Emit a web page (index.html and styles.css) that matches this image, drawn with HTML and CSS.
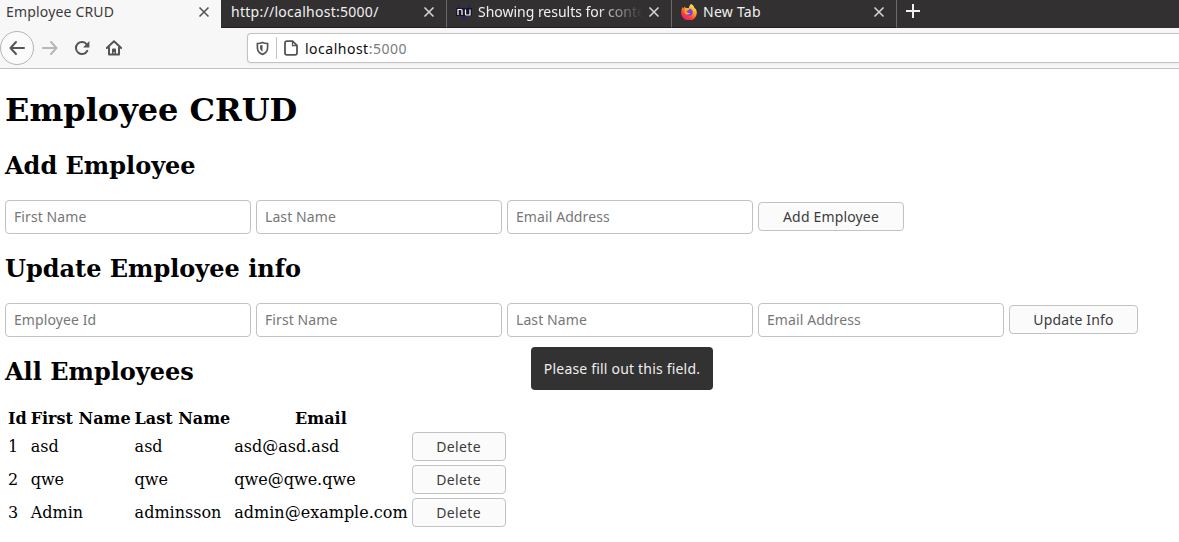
FILE: index.html
```html
<!DOCTYPE html>
<html lang="en">
<head>
<meta charset="utf-8">
<title>Employee CRUD</title>
<link rel="stylesheet" href="styles.css">
</head>
<body>
<header class="browser">
  <div class="tabs">
    <div class="tab tab-active"><span class="tab-title t-crud">Employee CRUD</span><svg class="close" viewBox="0 0 12 12"><path d="M1.5 1.5l9 9M10.5 1.5l-9 9"/></svg></div>
    <div class="tab tab-second"><span class="tab-title t-url">http://localhost:5000/</span><svg class="close" viewBox="0 0 12 12"><path d="M1.5 1.5l9 9M10.5 1.5l-9 9"/></svg></div>
    <div class="tab"><svg class="favicon" viewBox="0 0 16 16"><path d="M2 2l6 12 6-12" fill="none" stroke="#252362" stroke-width="2.4"/><path d="M0 4h16v8H0z" fill="#171629"/><path d="M2 11V5.5h3q1 0 1 1V11M9.500 5.500V10q0 1 1 1H14V5.500" fill="none" stroke="#fff" stroke-width="1.200"/></svg><span class="tab-title t-results">Showing results for conte</span><svg class="close" viewBox="0 0 12 12"><path d="M1.5 1.5l9 9M10.5 1.5l-9 9"/></svg></div>
    <div class="tab"><svg class="favicon" viewBox="0 0 16 16"><defs><linearGradient id="flame" x1=".85" y1=".05" x2=".25" y2="1"><stop offset="0" stop-color="#fff44f"/><stop offset=".4" stop-color="#ff9a27"/><stop offset=".7" stop-color="#ff4238"/><stop offset="1" stop-color="#e31587"/></linearGradient></defs><path d="M10 0c2 1 3 2.300 3.300 3.700C15 4.800 16 7 15.800 9A7.800 7.800 0 0 1 .2 8.600C.1 6.400.7 4.500 2 3l.2 1.600L4 2.400l.7 1.500 3.200.2C8 2.300 9 .8 10 0z" fill="url(#flame)"/><circle cx="8.200" cy="8.200" r="3.500" fill="#7542e5"/><path d="M4.300 4.500c2-.5 3.200.1 4.200 1.200-1.300.2-1.700 1-3 1.200.3 1.800 2 2.700 3.700 1.800-1 2.800-5.100 2.200-5.800-.8z" fill="#ffad26"/></svg><span class="tab-title t-new">New Tab</span><svg class="close" viewBox="0 0 12 12"><path d="M1.5 1.500l9 9M10.500 1.500l-9 9"/></svg></div>
    <svg class="plus" viewBox="0 0 14 14"><path d="M7 0v14M0 7h14"/></svg>
  </div>
  <div class="toolbar">
    <span class="back"><svg class="icon" viewBox="0 0 16 16"><path d="M15 8H1.500M7 2L1.500 8 7 14"/></svg></span>
    <svg class="icon forward" viewBox="0 0 16 16"><path d="M1 8h13.500M9 2l5.500 6L9 14"/></svg>
    <svg class="icon reload" viewBox="0 0 16 16"><path d="M13.300 10.800A6 6 0 1 1 12.800 4.500"/><path d="M15.400 1v6.500H9z" class="solid"/></svg>
    <svg class="icon home" viewBox="0 0 16 16"><path d="M.8 8L8 1.200 15.200 8M3 7.500V14.500H13V7.500" /><path d="M6 14V9.500q0-1 1-1h2q1 0 1 1V14H8.500v-2h-1v2z" class="solid"/></svg>
    <div class="address">
      <svg class="shield" viewBox="0 0 14 16"><path d="M7 1.500C5.200 2.300 3.500 2.500 1.500 2.600V7c0 4 2 6.200 5.500 7.300C10.500 13.200 12.500 11 12.500 7V2.600C10.500 2.500 8.800 2.300 7 1.500z"/><path d="M7 4.200v7.200C5.200 10.500 4.300 9 4.300 7V4.800C5.300 4.700 6.200 4.500 7 4.200z" class="solid"/></svg>
      <span class="divider"></span>
      <svg class="page-icon" viewBox="0 0 14 16"><path d="M3 1.200h5.500L13 5.500V13q0 1.800-1.800 1.800H2.800Q1 14.800 1 13V3q0-1.800 2-1.800z"/><path d="M8.500 1.500v4.200H13" class="thin"/></svg>
      <span class="location">localhost<span class="port">:5000</span></span>
    </div>
  </div>
</header>
<main class="page">
  <h1 class="title">Employee CRUD</h1>
  <h2 class="heading">Add Employee</h2>
  <form class="form-row">
    <input class="field" placeholder="First Name">
    <input class="field" placeholder="Last Name">
    <input class="field" placeholder="Email Address">
    <button class="button add" type="button">Add Employee</button>
  </form>
  <h2 class="heading">Update Employee info</h2>
  <form class="form-row">
    <input class="field" placeholder="Employee Id">
    <input class="field" placeholder="First Name">
    <div class="field-wrap"><input class="field" placeholder="Last Name"><div class="tooltip">Please fill out this field.</div></div>
    <input class="field" placeholder="Email Address">
    <button class="button update" type="button">Update Info</button>
  </form>
  <h2 class="heading">All Employees</h2>
  <table class="employees">
    <tr><th>Id</th><th>First Name</th><th>Last Name</th><th>Email</th><th></th></tr>
    <tr><td>1</td><td>asd</td><td>asd</td><td>asd@asd.asd</td><td><button class="button delete" type="button">Delete</button></td></tr>
    <tr><td>2</td><td>qwe</td><td>qwe</td><td>qwe@qwe.qwe</td><td><button class="button delete" type="button">Delete</button></td></tr>
    <tr><td>3</td><td>Admin</td><td>adminsson</td><td>admin@example.com</td><td><button class="button delete" type="button">Delete</button></td></tr>
  </table>
</main>
</body>
</html>
```
FILE: styles.css
```css
* { box-sizing: border-box; }
body { margin: 0; background: #fff; color: #000; font: 16px/19px "DejaVu Serif", serif; overflow: hidden; }
svg { display: block; flex: none; fill: none; stroke: currentColor; }
.browser { height: 69px; background: #f7f7f7; border-bottom: 1px solid #c2c2c2; font: 14px/20px "Noto Sans", sans-serif; }
.tabs { display: flex; height: 28px; background: #323031; color: #f0f0f0; }
.tab { display: flex; width: 225px; height: 28px; padding: 0 11px 4px 9px; align-items: center; border-right: 1px solid #6b696a; border-bottom: 1px solid #201e1f; }
.tab-active { width: 221px; padding: 0 11px 4px 6px; background: #f7f7f7; color: #3b3b3b; border: 0; }
.tab-second { width: 226px; padding-left: 10px; }
.tab-title { flex: 1; min-width: 0; white-space: nowrap; }
.close { width: 12px; height: 12px; stroke-width: 1.6; opacity: .85; }
.favicon { width: 16px; height: 16px; margin-right: 6px; stroke: none; }
.t-crud { letter-spacing: .17px; }
.t-url { letter-spacing: .27px; }
.t-new { letter-spacing: .25px; }
.t-results { margin-right: 5px; letter-spacing: -.02px; -webkit-mask-image: linear-gradient(90deg, #000 72%, transparent 100%); mask-image: linear-gradient(90deg, #000 72%, transparent 100%); }
.plus { width: 14px; height: 14px; margin: 4px 0 0 9px; stroke-width: 2; }
.toolbar { display: flex; height: 40px; align-items: center; color: #555; }
.back { display: flex; width: 34px; height: 34px; align-items: center; justify-content: center; border: 1px solid #b5b5b5; border-radius: 50%; background: #fbfbfb; }
.icon { width: 16px; height: 16px; stroke-width: 2; stroke-linecap: round; stroke-linejoin: round; }
.solid { fill: currentColor; stroke: none; }
.forward { margin-left: 8px; color: #b7b7b7; }
.reload { margin-left: 16px; }
.home { margin-left: 16px; }
.address { display: flex; flex: 1; height: 30px; margin-left: 125px; padding-left: 8px; align-items: center; background: #fff; border: 1px solid #c2c2c2; border-right: 0; border-radius: 4px 0 0 4px; box-shadow: 0 1px 3px rgba(0,0,0,.06); }
.shield { width: 13px; height: 15px; stroke-width: 1.8; }
.divider { width: 1px; height: 22px; margin: 0 7px; background: #c2c2c2; }
.page-icon { width: 14px; height: 16px; stroke-width: 1.8; }
.thin { stroke-width: 1.3; }
.location { margin-left: 7px; padding-top: 1px; color: #0c0c0c; letter-spacing: .5px; }
.port { color: #7b7b7b; }
.page { padding: 23px 5px 0; }
.title { margin: 0 0 23px; font-size: 32px; line-height: 37px; }
.heading { height: 28px; margin: 0; font-size: 24px; line-height: 28px; }
.form-row { display: flex; height: 34px; margin: 20px 0 21px; gap: 5px; }
.form-row:first-of-type { margin-top: 20px; }
.field { width: 246px; height: 34px; margin: 0; padding: 0 8px 2px; border: 1px solid #c2c2c2; border-radius: 4px; font: 14px/20px "Noto Sans", sans-serif; letter-spacing: .09px; }
.field::placeholder { color: #777; opacity: 1; }
.field-wrap { position: relative; display: flex; }
.tooltip { position: absolute; left: 24px; top: 44px; width: 182px; height: 43px; border-radius: 4px; background: #323232; color: #eee; font: 14px/43px "Noto Sans", sans-serif; letter-spacing: .19px; text-align: center; white-space: nowrap; }
.button { display: block; height: 29px; margin: 0; padding: 0; border: 1px solid #c2c2c2; border-radius: 4px; background: #fbfbfb; color: #3b3b3b; font: 14px/27px "Noto Sans", sans-serif; letter-spacing: .16px; }
.form-row .button { margin-top: 2px; }
.add { width: 146px; }
.update { width: 129px; }
.delete { width: 94px; letter-spacing: .35px; }
.employees { margin-top: 20px; border-spacing: 2px; }
.employees th, .employees td { padding: 1px; }
```
